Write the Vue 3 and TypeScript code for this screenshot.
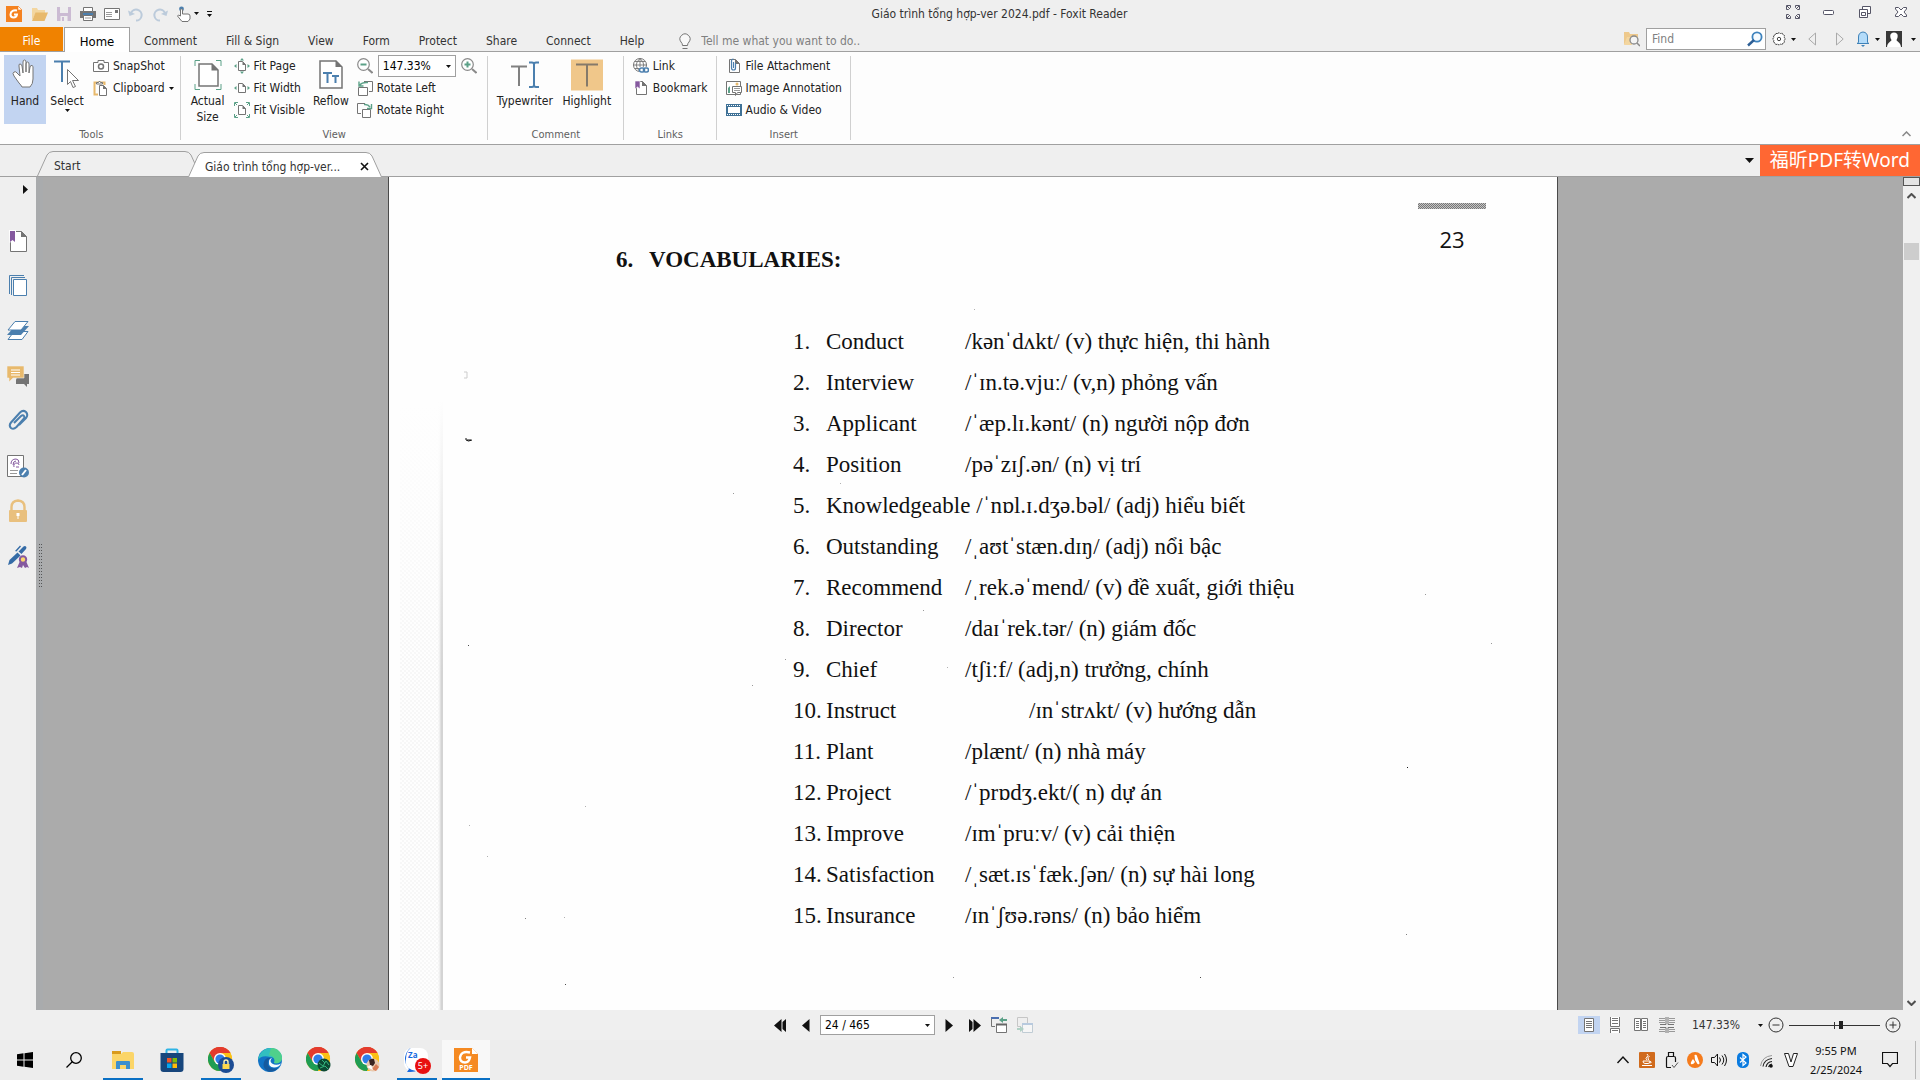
<script setup lang="ts">
import { h, ref } from 'vue'

interface Glyph { w: number; h: number; body: string }
interface Entry { word: string; meaning: string; tab?: boolean }

const page = '<path d="M3.5 1.5h6l4 4v9h-10z" fill="#fff" stroke="#747474"/><path d="M9 1v5h5z" fill="#747474"/>'
const smallPage = '<path d="M4.500 3.500h4l3 3v6h-7z" fill="#fff" stroke="#747474"/><path d="M8.500 3v4h3.500z" fill="#747474"/>'
const chromeBall = `<circle cx="12" cy="12" r="12" fill="#fbc116"/>
  <path d="M12 12 1.600 6A12 12 0 0 1 22.400 6z" fill="#e33b2e"/><path d="M12 6h10.400A12 12 0 0 0 1.600 6l5.200 9z" fill="#e33b2e"/>
  <path d="M1.600 6A12 12 0 0 0 12 24l5.200-9L12 12 6.800 15z" fill="#1f9d54"/><path d="M12 24a12 12 0 0 0 10.400-18H12l5.200 9z" fill="#fbc116"/>
  <circle cx="12" cy="12" r="6" fill="#fff"/><circle cx="12" cy="12" r="4.600" fill="#2f7de9"/>`

const glyphs: Record<string, Glyph> = {
  foxit: { w: 16, h: 16, body: '<path d="M0 0h12l4 4v12H0z" fill="#f58220"/><path d="M12 0v4h4z" fill="#fff" stroke="#f58220" stroke-width=".6"/><path d="M11 4.500C8 3.500 4.500 5 4.500 8.500c0 4 6 4 6.500 0H8" fill="none" stroke="#fff" stroke-width="2"/>' },
  open: { w: 16, h: 16, body: '<path d="M0 14V2h5l1 2h7v3H4z" fill="#f3d6a0"/><path d="M3.500 6.500H16L12.500 15H0z" fill="#e8b96c"/>' },
  save: { w: 16, h: 16, body: '<path d="M1 1h14v14H1z" fill="#cbbbd3"/><path d="M4 1h8v6H4z" fill="#eee"/><path d="M4.500 10h7v5h-7z" fill="#eee"/><path d="M6 11h2v4H6z" fill="#cbbbd3"/>' },
  print: { w: 16, h: 16, body: '<path d="M0 5h16v7H0z" fill="#747474"/><path d="M3.500 1.500h9v4h-9z" fill="#fff" stroke="#747474"/><path d="M3.500 9.500h9v5h-9z" fill="#fff" stroke="#747474"/><path d="M3 7h10v2H3z" fill="#4b7fae"/><path d="M5 12h6" stroke="#999"/>' },
  mail: { w: 16, h: 16, body: '<path d="M.500 2.500h15v11H.500z" fill="#fff" stroke="#747474"/><path d="M2 6.500h6M2 8.500h6M2 10.500h6" stroke="#999"/><path d="M11 4h3v3h-3z" fill="#747474"/>' },
  undo: { w: 16, h: 16, body: '<path d="M3 7a5.500 5.500 0 1 1 5 7.500" fill="none" stroke="#bccbdb" stroke-width="2"/><path d="M0 4.500 7 8 1.500 10z" fill="#bccbdb"/>' },
  redo: { w: 16, h: 16, body: '<path d="M13 7a5.500 5.500 0 1 0-5 7.500" fill="none" stroke="#bccbdb" stroke-width="2"/><path d="M16 4.500 9 8l5.500 2z" fill="#bccbdb"/>' },
  touch: { w: 16, h: 16, body: '<circle cx="5.500" cy="3" r="2.400" fill="#4b7fae"/><path d="M4.500 10V3.500q1-1 2 0V8h5.500q2 0 2 2v3l-2 2.500H6L1.500 10l1-1z" fill="#fff" stroke="#747474"/>' },
  caret: { w: 5, h: 3, body: '<path d="M0 0h5L2.500 3z" fill="#111"/>' },
  customize: { w: 5, h: 6, body: '<path d="M0 0h5v1H0zM0 3h5L2.500 6z" fill="#111"/>' },
  bigcaret: { w: 9, h: 5, body: '<path d="M0 0h9L4.500 5z" fill="#111"/>' },
  full: { w: 14, h: 14, body: '<path d="M.500 4.500v-4h4v2l-2 2zM9.500 .500h4v4h-2l-2-2zM.500 9.500v4h4v-2l-2-2zM9.500 13.500h4v-4h-2l-2 2zM1 1l3 3M13 1l-3 3M1 13l3-3M13 13l-3-3" fill="none" stroke="#556"/>' },
  minimize: { w: 12, h: 14, body: '<rect x=".500" y="5.500" width="10" height="4" rx="1" fill="#fff" stroke="#556"/>' },
  restore: { w: 12, h: 14, body: '<path d="M3.500 4V1.500h8v7H9" fill="#fff" stroke="#556"/><path d="M.500 4.500h8v8h-8zM2.500 7.500h4v3h-4z" fill="#fff" stroke="#556"/>' },
  close: { w: 12, h: 14, body: '<path d="M.500 2.500h3l2.500 2.500 2.500-2.500h3v1.500L9 7l2.500 3v1.500h-3L6 9l-2.500 2.500h-3V10L3 7 .500 4z" fill="#fff" stroke="#556"/>' },
  findFolder: { w: 16, h: 16, body: '<path d="M0 14V1h5l1 2h8v4H4z" fill="#eec98c"/><path d="M0 14 3 6h5v8z" fill="#f3d6a0"/><circle cx="10" cy="9" r="4" fill="#f4f4f4" stroke="#8a8a8a" stroke-width="1.300"/><path d="m13 12 3 3" stroke="#8a8a8a" stroke-width="1.500"/>' },
  search: { w: 16, h: 16, body: '<circle cx="10" cy="6" r="4.600" fill="#f6fbff" stroke="#3e83bd" stroke-width="1.800"/><path d="M7 9 1 14.500" stroke="#2d5f96" stroke-width="2.400"/>' },
  gear: { w: 14, h: 14, body: '<path d="M5.500 1.500 7 .700l1.500.800 1.700-.300.800 1.500 1.500.800-.300 1.700L13.300 7l-1.100 1.500.300 1.700-1.500.800-.800 1.500-1.700-.300-1.500.800-1.500-.800-1.700.300-.800-1.500-1.500-.800.300-1.700L.700 7l1.100-1.500-.300-1.700 1.500-.800.800-1.500z" fill="#fff" stroke="#444" stroke-dasharray="2 .500"/><circle cx="7" cy="7" r="1.700" fill="none" stroke="#444"/>' },
  prev: { w: 9, h: 14, body: '<path d="M7.500 1v12L.800 7z" fill="none" stroke="#aaa"/>' },
  next: { w: 9, h: 14, body: '<path d="M1.500 1v12L8.200 7z" fill="none" stroke="#aaa"/>' },
  bell: { w: 14, h: 16, body: '<path d="M2.500 11.500V6q0-4.500 4.500-5 4.500.500 4.500 5v5.500l1.500 1H1z" fill="#b4dcfa" stroke="#3f82b8"/><path d="M5 14h4l-2 2z" fill="#3f82b8"/>' },
  person: { w: 16, h: 16, body: '<path d="M0 0h16v16H0z" fill="#383838"/><path d="M8 1.500c5 0 4 5.500 2.500 7.500 0 1.500 4 2 4.500 7H1c.500-5 4.500-5.500 4.500-7C4 7 3 1.500 8 1.500z" fill="#fff"/>' },
  bulb: { w: 12, h: 16, body: '<path d="M3.500 12.500q0-2-1.500-3.500a5 5 0 1 1 8 0q-1.500 1.500-1.500 3.500zM3.500 15.500h5" fill="#f8f8f8" stroke="#747474"/>' },
  hand: { w: 28, h: 32, body: '<path d="M9 17 8 7q-.500-2 1-2t2 2l1 7V3q0-2 1.500-2T15 3v10-8q0-2 1.500-2T18 5v9l1-6q.500-2 2-1.500t1 2.500v11q0 5-3 8h-8q-1-2-3-4L3 17q-2-3 0-4t3 1z" fill="#fff" stroke="#747474"/>' },
  select: { w: 28, h: 30, body: '<path d="M1 1.500h16M9 1v21" fill="none" stroke="#4b7fae" stroke-width="2"/><path d="m14.500 9.500 11 11h-6l3 6-2.500 1-2.500-6-3 3z" fill="#fff" stroke="#747474"/>' },
  camera: { w: 16, h: 14, body: '<path d="M.500 3.500H5v-2h6v2h4.500v9H.500z" fill="#fff" stroke="#747474"/><circle cx="8" cy="7.500" r="2.500" fill="none" stroke="#747474" stroke-width="1.500"/>' },
  clipboard: { w: 16, h: 16, body: '<path d="M5 14.500H1.500v-12h10V5" fill="none" stroke="#e8b96c" stroke-width="2"/><path d="M3.500 2.500h2q1-3 2 0h2V4h-6z" fill="#fff" stroke="#747474"/><path d="M6.500 5.500h4l3 3v7h-7z" fill="#fff" stroke="#747474"/><path d="M10 5v4h4z" fill="#747474"/>' },
  actual: { w: 28, h: 30, body: '<path d="M1 6V.500h5M22 .500h5V6M1 24v5.500h5M22 29.500h5V24" fill="none" stroke="#5ba087"/><path d="M5 4h13l6 6v16H5z" fill="#fff" stroke="#747474" stroke-width="1.500"/><path d="M17.500 3.500v7H24z" fill="#747474"/>' },
  fitPage: { w: 16, h: 16, body: smallPage + '<path d="M6 2.500 8 0l2 2.500zM6 13.500 8 16l2-2.500zM2.500 6 0 8l2.500 2zM13.500 6 16 8l-2.500 2z" fill="#5ba087"/>' },
  fitWidth: { w: 16, h: 16, body: smallPage + '<path d="M2.500 6 0 8l2.500 2zM13.500 6 16 8l-2.500 2z" fill="#5ba087"/>' },
  fitVisible: { w: 16, h: 16, body: smallPage + '<path d="M.500 4V.500H4M12 .500h3.500V4M.500 12v3.500H4M12 15.500h3.500V12" fill="none" stroke="#5ba087"/><path d="m1 1 2 2m12-2-2 2M1 15l2-2m12 2-2-2" stroke="#5ba087"/>' },
  reflow: { w: 24, h: 30, body: '<path d="M1 1h16l6 6v21H1z" fill="#fff" stroke="#747474" stroke-width="1.500"/><path d="M16.500.500V7H23z" fill="#747474"/><path d="M4 13h9M8.500 13v10M13 16h7M16.500 16v7" fill="none" stroke="#4b7fae" stroke-width="2"/>' },
  zoomOut: { w: 16, h: 16, body: '<circle cx="6.500" cy="6.500" r="5.800" fill="#fff" stroke="#8a8a8a" stroke-width="1.200"/><path d="m11 11 4.500 4" stroke="#8a8a8a" stroke-width="2"/><path d="M3.500 6.500h6" stroke="#5ba087" stroke-width="2"/>' },
  zoomIn: { w: 16, h: 16, body: '<circle cx="6.500" cy="6.500" r="5.800" fill="#fff" stroke="#8a8a8a" stroke-width="1.200"/><path d="m11 11 4.500 4" stroke="#8a8a8a" stroke-width="2"/><path d="M3.500 6.500h6M6.500 3.500v6" stroke="#5ba087" stroke-width="2"/>' },
  rotateLeft: { w: 16, h: 16, body: '<path d="M7 1.500h8.500v10H12" fill="none" stroke="#747474"/><path d="M1.500 7.500h9v8h-9z" fill="#fff" stroke="#747474"/><path d="M3 5q2-3 8-2.500M2 1.500v4.500h4.500" fill="none" stroke="#5ba087" stroke-width="1.400"/>' },
  rotateRight: { w: 16, h: 16, body: '<path d="M8 1.500H.500v10H4" fill="none" stroke="#747474"/><path d="M5.500 7.500h8v8h-8z" fill="#fff" stroke="#747474"/><path d="M13 5q-2-3-6-2.500M14.500 2v4.500H10" fill="none" stroke="#5ba087" stroke-width="1.400"/>' },
  typewriter: { w: 28, h: 28, body: '<path d="M0 5.500h16M8 5v20" stroke="#808080" stroke-width="2"/><path d="M18 1.500h3q2 0 2 2 0-2 2-2h3M23 3v22M18 26h3q2 0 2-2 0 2 2 2h3" fill="none" stroke="#4b7fae" stroke-width="2"/>' },
  highlight: { w: 32, h: 31, body: '<path d="M0 0h32v31H0z" fill="#f0c78a"/><path d="M5 5h22M16 5v22" stroke="#857a6a" stroke-width="2"/>' },
  link: { w: 16, h: 16, body: '<circle cx="7" cy="7" r="6.500" fill="#fff" stroke="#747474"/><path d="M.500 7h13M7 .500v13M2 3.500h10M2 10.500h7M7 .500Q-.500 7 7 13.500M7 .500Q14.500 7 7 13.500" fill="none" stroke="#747474" stroke-width=".900"/><path d="M6 9h10v6H6z" fill="#fff"/><rect x="6.500" y="10" width="5" height="4" rx="2" fill="none" stroke="#4b7fae" stroke-width="1.600"/><rect x="10.500" y="10" width="5" height="4" rx="2" fill="none" stroke="#4b7fae" stroke-width="1.600"/>' },
  bookmark: { w: 16, h: 16, body: page + '<path d="M2 1h5v8L4.500 7 2 9z" fill="#85599f" stroke="#fff" stroke-width=".600"/>' },
  attach: { w: 16, h: 16, body: page + '<path d="M9.500 5v5q0 2-2 2t-2-2V3q0-2 2-2M7.500 4v6" fill="none" stroke="#4b7fae" stroke-width="1.200"/>' },
  imageNote: { w: 16, h: 16, body: '<path d="M.500 1.500h14v13H.500z" fill="#fff" stroke="#747474"/><path d="M2 13V8l2-2v7z" fill="#5ba087"/><circle cx="11" cy="4" r="1.500" fill="#e8b96c"/><path d="M6.500 6.500h9v6h-4l-2 3v-3h-3z" fill="#fff" stroke="#747474"/><path d="M8 8.500h6M8 10.500h6" stroke="#999"/>' },
  video: { w: 16, h: 12, body: '<path d="M0 0h16v12H0z" fill="#3f7196"/><path d="M2 3h12v6H2z" fill="#fff"/><path d="M1 1.500h14M1 10.500h14" stroke="#fff" stroke-dasharray="1 1"/>' },
  collapse: { w: 9, h: 6, body: '<path d="m.500 5 4-4 4 4" fill="none" stroke="#888" stroke-width="1.500"/>' },
  scrollUp: { w: 9, h: 6, body: '<path d="m.500 5 4-4 4 4" fill="none" stroke="#505050" stroke-width="2"/>' },
  scrollDown: { w: 9, h: 6, body: '<path d="m.500 1 4 4 4-4" fill="none" stroke="#505050" stroke-width="2"/>' },
  cross: { w: 9, h: 9, body: '<path d="m1 1 7 7M8 1 1 8" stroke="#111" stroke-width="1.600"/>' },
  expand: { w: 5, h: 9, body: '<path d="M0 0v9l5-4.500z" fill="#111"/>' },
  sBookmark: { w: 24, h: 24, body: '<path d="M4.500 2.500h11l5 5v15h-16z" fill="#fff" stroke="#747474"/><path d="M15 2v6h6z" fill="#747474"/><path d="M3 1h7v13l-3-2.500L3.500 14z" fill="#fff"/><path d="M4 2h5v11l-2.500-2L4 13z" fill="#85599f"/>' },
  sPages: { w: 24, h: 24, body: '<path d="M3.500 20V1.500H18M5.500 21V3.500H19" fill="none" stroke="#4b7fae"/><path d="M7.500 5.500h13v16h-13z" fill="#fff" stroke="#4b7fae"/>' },
  sLayers: { w: 24, h: 24, body: '<path d="M2 20.500h14l6-8H8z" fill="#fff" stroke="#4b7fae"/><path d="M1 16h14l8-9H9z" fill="#4b7fae"/><path d="M2 11h13l7-8.500H9z" fill="#fff" stroke="#4b7fae"/>' },
  sComments: { w: 24, h: 24, body: '<path d="M12 10h11v10h-2v3l-3-3h-8v-4z" fill="#747474"/><path d="M1 2h17v12H7l-4 4v-4H1z" fill="#e8b96c" stroke="#efefef" stroke-width=".600"/><path d="M5 6h9M5 8.500h9M5 11h9" stroke="#fff"/>' },
  sClip: { w: 24, h: 24, body: '<path d="m8 14 7-7q2-1.500 3 0t-.500 3l-7 8q-3 3-5.500 1-2.500-2.500 0-5.500l9-10q3-3 6-.500 2.500 3 0 6l-7 7" fill="none" stroke="#4b7fae" stroke-width="2"/>' },
  sSign: { w: 24, h: 24, body: '<path d="M1.500 1.500h16v21h-16z" fill="#fff" stroke="#747474"/><path d="M5 10q0-5 5-5 3 0 3 4M7 11q0-4 3-4M8 13q-1-4 3-4 2 0 2 2M10 13h3" fill="none" stroke="#85599f"/><path d="M4 16.500h8M4 19.500h7" stroke="#999"/><circle cx="18" cy="18.500" r="5" fill="#4b7fae"/><path d="m16 21 4-5" stroke="#fff" stroke-width="2"/>' },
  sLock: { w: 24, h: 24, body: '<path d="M5.500 12V8q0-6 6.500-6.500Q18.500 2 18.500 8v4" fill="none" stroke="#e9c07e" stroke-width="2.400"/><rect x="3" y="11" width="18" height="12" rx="1" fill="#e9c07e"/><path d="M10.500 14h3v3h-1v3h-1v-3h-1z" fill="#fff"/>' },
  sPen: { w: 24, h: 24, body: '<path d="m2 21 1.500-5 8-7.500 3 3L6 19.500z" fill="#346ba6"/><path d="m12.500 7.500 5-5q1.500-1 2.500 0t0 2.500l-4.500 5zM9 7l5-5.500 1 1-4.500 5z" fill="#346ba6"/><path d="m14 17-3 7 3-1 2 1 1-3 2 3 2-1 2 1-3-7z" fill="#85599f"/><circle cx="17" cy="15.500" r="3.200" fill="#ffd76b" stroke="#85599f" stroke-width="2"/>' },
  first: { w: 13, h: 13, body: '<path d="M7.500 0v13L0 6.500zM12 0v13L8.500 10V3z" fill="#111"/>' },
  back: { w: 8, h: 13, body: '<path d="M7.500 0v13L0 6.500z" fill="#111"/>' },
  forward: { w: 8, h: 13, body: '<path d="M.500 0v13L8 6.500z" fill="#111"/>' },
  last: { w: 13, h: 13, body: '<path d="M5.500 0v13l7.500-6.500zM1 0v13l3.500-3V3z" fill="#111"/>' },
  viewBack: { w: 16, h: 16, body: '<path d="M4 9.500H.500v-8H7" fill="none" stroke="#747474"/><path d="M0 0h8v2H0z" fill="#4a6fb0"/><path d="M5.500 7.500h10v8h-10z" fill="#fff" stroke="#747474"/><path d="M5 6.500h11v2H5z" fill="#666"/><path d="M16 3h-6" stroke="#5ba087" stroke-width="2"/><path d="M12 0 8 3l4 3z" fill="#5ba087"/>' },
  viewNext: { w: 16, h: 16, body: '<path d="M4 9.500H.500v-9h10V6" fill="none" stroke="#c6c6c6"/><path d="M5.500 7.500h10v8h-10z" fill="#f6f6f6" stroke="#c0ccd4"/><path d="M5 6h11v2H5z" fill="#b8cade"/><path d="M0 12h5" stroke="#b0d0c4" stroke-width="2"/><path d="m3 9 4 3-4 3z" fill="#b0d0c4"/>' },
  single: { w: 16, h: 16, body: '<path d="M3.500 1.500h9v13h-9z" fill="#fff" stroke="#747474"/><path d="M5 4.500h6M5 6.500h6M5 8.500h6M5 10.500h6" stroke="#747474"/>' },
  continuous: { w: 16, h: 16, body: '<path d="M3.500 0v9.500h9V0M3.500 16v-4.500h9V16" fill="#fff" stroke="#747474"/><path d="M5 1.500h6M5 3.500h6M5 6.500h6M5 13.500h6" stroke="#747474"/>' },
  facing: { w: 16, h: 16, body: '<path d="M1.500 1.500h6v12h-6zM8.500 1.500h6v12h-6z" fill="#fff" stroke="#747474"/><path d="M3 4.500h3M3 6.500h3M3 8.500h3M10 4.500h3M10 6.500h3M10 8.500h3M3 10.500h3M10 10.500h3" stroke="#747474"/>' },
  contFacing: { w: 16, h: 16, body: '<path d="M7 0v7.500H1M9 0v7.500h6M7 16v-5.500H1M9 16v-5.500h6" fill="none" stroke="#747474"/><path d="M0 1.500h6M0 3.500h6M0 5.500h6M10 1.500h6M10 3.500h6M10 5.500h6M0 12.500h6M10 12.500h6M0 14.500h6M10 14.500h6" stroke="#999"/>' },
  minus: { w: 16, h: 16, body: '<circle cx="8" cy="8" r="7" fill="none" stroke="#333"/><path d="M4.500 8h7" stroke="#333"/>' },
  plus: { w: 16, h: 16, body: '<circle cx="8" cy="8" r="7" fill="none" stroke="#333"/><path d="M4.500 8h7M8 4.500v7" stroke="#333"/>' },
  windows: { w: 16, h: 16, body: '<path d="M0 2.200 6.500 1.300v6.200H0zM7.500 1.200 16 0v7.500H7.500zM0 8.500h6.500v6.200L0 13.800zM7.500 8.500H16V16l-8.500-1.200z" fill="#000"/>' },
  loupe: { w: 16, h: 16, body: '<circle cx="10" cy="6" r="5.300" fill="none" stroke="#000" stroke-width="1.300"/><path d="M6.500 9.500.500 15.500" stroke="#000" stroke-width="1.300"/>' },
  explorer: { w: 24, h: 24, body: '<path d="M1 3h9v4H1z" fill="#d99b1c"/><path d="M1 6h9l2-2h9q2 0 2 2v15H1z" fill="#fbd568"/><path d="M5 21v-7q0-1 1-1h12q1 0 1 1v7h-4v-4H9v4z" fill="#3c8fce"/>' },
  store: { w: 24, h: 24, body: '<path d="M6.500 6V2.500q0-1 1-1h9q1 0 1 1V6" fill="none" stroke="#2fb4e5" stroke-width="2"/><path d="M.500 5h23v16q0 3-3 3h-17q-3 0-3-3z" fill="#17467c"/><path d="M7 10h4.500v4.500H7z" fill="#f35325"/><path d="M12.500 10H17v4.500h-4.500z" fill="#81bc06"/><path d="M7 15.500h4.500V20H7z" fill="#05a6f0"/><path d="M12.500 15.500H17V20h-4.500z" fill="#ffba08"/>' },
  chromeLock: { w: 26, h: 26, body: chromeBall + '<circle cx="18" cy="18" r="8" fill="#1c4c94"/><path d="M16 17v-2q0-2 2-2t2 2v2" fill="none" stroke="#fff3b0" stroke-width="1.400"/><path d="M14.500 17h7v5h-7z" fill="#ffd84d"/>' },
  chromeGreen: { w: 26, h: 26, body: chromeBall + '<circle cx="18" cy="18" r="6.500" fill="#0c4a33"/><path d="m13 16 4 3 3-5 3 4M14 21l5-2 3 3M16 13l3 3" fill="none" stroke="#34b47c"/>' },
  chromePhoto: { w: 26, h: 26, body: chromeBall + '<circle cx="18" cy="18" r="6.500" fill="#e9c9ae"/><path d="M14 13q3-2 5-1l1 4-2 3-3-1z" fill="#3a2420"/><path d="m17 22 4-5 3 3-3 4z" fill="#d97b54"/><path d="m12 20 4-2 2 5z" fill="#fff"/>' },
  edge: { w: 24, h: 24, body: '<circle cx="12" cy="12" r="12" fill="#1173c5"/><path d="M0 12C1 4 7 0 12 0c8 0 12 5 12 10 0 4-4 6-8 5 2-3 0-6-4-6-6-2-10 0-12 3z" fill="#31bfc0"/><path d="M13 0c7 0 11 5 11 10 0 4-4 6-8 5 2-4-1-7-5-8z" fill="#4fd08b"/><path d="M13 10q-4 2-3 7 2 5 10 3-4 5-10 3.500Q4 20 6 14q2-5 7-4z" fill="#155a9e"/><path d="M14 10q-3 3 0 5.500 4 2.500 9 0-2 4-7 4-6-.500-5-6 0-3 3-3.500z" fill="#f4fbff"/>' },
  chat: { w: 26, h: 26, body: '<rect x="0" y="1" width="24" height="23" rx="8" fill="#fff"/><path d="M5 2q-8 10 0 20l-2 3q7 0 9-1-12-2-10-12 0-8 5-11z" fill="#1769df"/>' },
  reader: { w: 24, h: 24, body: '<path d="M0 0h18l6 6v18H0z" fill="#f58a22"/><path d="M18 0v6h6z" fill="#fff"/><path d="M16 4.500q-9-2-10 5 0 5 5 5 4 0 5-5h-4" fill="none" stroke="#fff" stroke-width="2.400"/>' },
  up: { w: 16, h: 16, body: '<path d="m2.500 11 5.500-6 5.500 6" fill="none" stroke="#111" stroke-width="1.400"/>' },
  java: { w: 16, h: 16, body: '<rect width="16" height="16" rx="1" fill="#d06a1c"/><path d="M8 2q2 1.500 0 3t0 3M10.500 4Q8 5.500 9.500 8" fill="none" stroke="#fff"/><path d="M4 9h7q0 2.500-2 2.500H6Q4 11.500 4 9zM11 9.500q2.500 0 0 2M3 13.500h10" fill="none" stroke="#fff"/>' },
  usb: { w: 16, h: 16, body: '<path d="M5.500 4.500v-4h5v4M8 15.500H4.500q-1 0-1-1V6q0-1.500 1.500-1.500h6Q12.500 4.500 12.500 6v4" fill="none" stroke="#111" stroke-width="1.200"/><path d="m9 13 2 2.500 4-5" fill="none" stroke="#555"/>' },
  avast: { w: 16, h: 16, body: '<circle cx="8" cy="8" r="8" fill="#f57b1c"/><path d="M7.500 3q2-1 2.500 1l2.500 7q0 2-2 1L8 8zM6 7q-3 4-2 5 2 1 4-2z" fill="#fff"/>' },
  speaker: { w: 16, h: 16, body: '<path d="M.500 5.500h3l3-3.500v12l-3-3.500h-3z" fill="none" stroke="#111"/><path d="M8.500 5.500q2 2.500 0 5M11 3.500q3.500 4.500 0 9M13.500 2q4 6 0 12" fill="none" stroke="#111"/>' },
  bluetooth: { w: 16, h: 16, body: '<rect x="2" width="12" height="16" rx="5.500" fill="#0a7be0"/><path d="m5 5.500 6 5.500-3 2.500v-11L11 5l-6 5.500" fill="none" stroke="#fff" stroke-width="1.200"/>' },
  wifi: { w: 16, h: 16, body: '<path d="M1.500 14Q3 4.500 13 3.500" fill="none" stroke="#999"/><path d="M4 14.500q1-7 9-8M7 15q1-5 6-5.500M9.500 15q1-2.500 3.500-3" fill="none" stroke="#222" stroke-width="1.200"/><circle cx="12" cy="14" r="1.800" fill="#111"/>' },
  unikey: { w: 16, h: 16, body: '<path d="M1.500 1.500h4L8 10l2.500-8.500h4l-4.500 13H6z" fill="#fff" stroke="#222"/>' },
  notice: { w: 16, h: 18, body: '<path d="M.500 1.500h15v11h-5L8 15.500l-2.500-3h-5z" fill="none" stroke="#111" stroke-width="1.200"/>' },
}

const Icon = (props: { name: string }) => {
  const g = glyphs[props.name]
  return h('svg', { class: 'icon', width: g.w, height: g.h, viewBox: `0 0 ${g.w} ${g.h}`, 'aria-hidden': 'true', innerHTML: g.body })
}
Icon.props = ['name']

const quick = ['open', 'save', 'print', 'mail', 'undo', 'redo', 'touch']
const menus = ['Comment', 'Fill & Sign', 'View', 'Form', 'Protect', 'Share', 'Connect', 'Help']
const fits = [['fitPage', 'Fit Page'], ['fitWidth', 'Fit Width'], ['fitVisible', 'Fit Visible']]
const inserts = [['attach', 'File Attachment'], ['imageNote', 'Image Annotation'], ['video', 'Audio & Video']]
const panels = [
  ['sBookmark', 'Bookmarks'], ['sPages', 'Pages'], ['sLayers', 'Layers'], ['sComments', 'Comments'],
  ['sClip', 'Attachments'], ['sSign', 'Signatures'], ['sLock', 'Security'], ['sPen', 'Digital signatures'],
]
const layouts = [['single', 'Single page'], ['continuous', 'Continuous'], ['facing', 'Facing'], ['contFacing', 'Continuous facing']]
const apps = [
  { icon: 'windows', name: 'Start' }, { icon: 'loupe', name: 'Search' },
  { icon: 'explorer', name: 'File Explorer', open: true }, { icon: 'store', name: 'Store' },
  { icon: 'chromeLock', name: 'Chrome', open: true }, { icon: 'edge', name: 'Edge' },
  { icon: 'chromeGreen', name: 'Chrome profile 2' }, { icon: 'chromePhoto', name: 'Chrome profile 3' },
  { icon: 'chat', name: 'Zalo', open: true, badge: '5+' }, { icon: 'reader', name: 'Foxit Reader', open: true, active: true },
]
const tray = ['up', 'java', 'usb', 'avast', 'speaker', 'bluetooth', 'wifi', 'unikey']
const zoom = ref(57)

const entries: Entry[] = [
  { word: 'Conduct', meaning: '/kənˈdʌkt/ (v) thực hiện, thi hành' },
  { word: 'Interview', meaning: '/ˈɪn.tə.vjuː/ (v,n) phỏng vấn' },
  { word: 'Applicant', meaning: '/ˈæp.lɪ.kənt/ (n) người nộp đơn' },
  { word: 'Position', meaning: '/pəˈzɪʃ.ən/ (n) vị trí' },
  { word: 'Knowledgeable', meaning: '/ˈnɒl.ɪ.dʒə.bəl/ (adj) hiểu biết' },
  { word: 'Outstanding', meaning: '/ˌaʊtˈstæn.dɪŋ/ (adj) nổi bậc' },
  { word: 'Recommend', meaning: '/ˌrek.əˈmend/ (v) đề xuất, giới thiệu' },
  { word: 'Director', meaning: '/daɪˈrek.tər/ (n) giám đốc' },
  { word: 'Chief', meaning: '/tʃiːf/ (adj,n) trưởng, chính' },
  { word: 'Instruct', meaning: '/ɪnˈstrʌkt/ (v) hướng dẫn', tab: true },
  { word: 'Plant', meaning: '/plænt/ (n) nhà máy' },
  { word: 'Project', meaning: '/ˈprɒdʒ.ekt/( n) dự án' },
  { word: 'Improve', meaning: '/ɪmˈpruːv/ (v) cải thiện' },
  { word: 'Satisfaction', meaning: '/ˌsæt.ɪsˈfæk.ʃən/ (n) sự hài long' },
  { word: 'Insurance', meaning: '/ɪnˈʃʊə.rəns/ (n) bảo hiểm' },
]

/* dust left by the scanner glass: x, y, opacity */
const specks = [
  [79, 468, .7], [344, 316, .4], [451, 306, .3], [1018, 590, .9], [80, 648, .3], [98, 679, .3], [196, 629, .3],
  [136, 741, .5], [175, 740, .3], [1017, 757, .5], [811, 800, .7], [564, 800, .4], [176, 807, .7], [363, 508, .4],
  [585, 132, .3], [1036, 417, .4], [1102, 466, .4], [558, 490, .3], [396, 482, .4], [534, 433, .4],
]
</script>

<template>
  <div class="app">
    <header class="titlebar">
      <div class="quick">
        <Icon name="foxit" class="logo" />
        <button v-for="q in quick" :key="q" :aria-label="q"><Icon :name="q" /></button>
        <Icon name="caret" class="after" />
        <button aria-label="Customize toolbar" class="customize"><Icon name="customize" /></button>
      </div>
      <h1>Giáo trình tổng hợp-ver 2024.pdf - Foxit Reader</h1>
      <div class="window">
        <button aria-label="Full screen"><Icon name="full" /></button>
        <button aria-label="Minimize"><Icon name="minimize" /></button>
        <button aria-label="Restore"><Icon name="restore" /></button>
        <button aria-label="Close"><Icon name="close" /></button>
      </div>
    </header>

    <nav class="menubar">
      <button class="file">File</button>
      <button class="home">Home</button>
      <button v-for="m in menus" :key="m" class="menu">{{ m }}</button>
      <label class="tell"><Icon name="bulb" /><input type="text" placeholder="Tell me what you want to do.." aria-label="Tell me what you want to do"></label>
      <div class="tools">
        <button aria-label="Search folder"><Icon name="findFolder" /></button>
        <label class="find"><input type="text" placeholder="Find" aria-label="Find"><Icon name="search" /></label>
        <button class="drop" aria-label="Settings"><Icon name="gear" /><Icon name="caret" /></button>
        <button class="arrow" aria-label="Previous"><Icon name="prev" /></button>
        <button class="arrow" aria-label="Next"><Icon name="next" /></button>
        <button class="drop" aria-label="Notifications"><Icon name="bell" /><Icon name="caret" /></button>
        <button class="drop account" aria-label="Account"><Icon name="person" /><Icon name="caret" /></button>
      </div>
    </nav>

    <section class="ribbon">
      <div class="group">
        <div class="items">
          <button class="big on"><Icon name="hand" /><span>Hand</span></button>
          <button class="big"><Icon name="select" /><span>Select</span><Icon name="caret" /></button>
          <div class="stack">
            <button><Icon name="camera" />SnapShot</button>
            <button><Icon name="clipboard" />Clipboard<Icon name="caret" /></button>
          </div>
        </div>
        <h2>Tools</h2>
      </div>
      <div class="group">
        <div class="items">
          <button class="big"><Icon name="actual" /><span>Actual<br>Size</span></button>
          <div class="stack"><button v-for="f in fits" :key="f[0]"><Icon :name="f[0]" />{{ f[1] }}</button></div>
          <button class="big"><Icon name="reflow" /><span>Reflow</span></button>
          <div class="stack">
            <div class="zoom">
              <button aria-label="Zoom out"><Icon name="zoomOut" /></button>
              <span class="combo"><select aria-label="Zoom level"><option>147.33%</option></select><Icon name="caret" /></span>
              <button aria-label="Zoom in"><Icon name="zoomIn" /></button>
            </div>
            <button><Icon name="rotateLeft" />Rotate Left</button>
            <button><Icon name="rotateRight" />Rotate Right</button>
          </div>
        </div>
        <h2>View</h2>
      </div>
      <div class="group">
        <div class="items">
          <button class="big wide"><Icon name="typewriter" /><span>Typewriter</span></button>
          <button class="big wide"><Icon name="highlight" /><span>Highlight</span></button>
        </div>
        <h2>Comment</h2>
      </div>
      <div class="group slim">
        <div class="items"><div class="stack">
          <button><Icon name="link" />Link</button>
          <button><Icon name="bookmark" />Bookmark</button>
        </div></div>
        <h2>Links</h2>
      </div>
      <div class="group slim">
        <div class="items"><div class="stack"><button v-for="i in inserts" :key="i[0]"><Icon :name="i[0]" />{{ i[1] }}</button></div></div>
        <h2>Insert</h2>
      </div>
      <button class="collapse" aria-label="Collapse ribbon"><Icon name="collapse" /></button>
    </section>

    <div class="doctabs">
      <button class="doctab">
        <svg width="164" height="25" aria-hidden="true"><path d="M.5 25 10 4q2-3.500 6-3.500h132q4 0 6 3.500L163.500 25" fill="#efefef" stroke="#a0a0a0" /></svg>
        <span>Start</span>
      </button>
      <button class="doctab current">
        <svg width="194" height="25" aria-hidden="true"><path d="M.5 25 10 4q2-3.500 6-3.500h162q4 0 6 3.500L193.500 25" fill="#fff" stroke="#a0a0a0" /></svg>
        <span>Giáo trình tổng hợp-ver...</span><Icon name="cross" />
      </button>
      <button class="tablist" aria-label="Tab list"><Icon name="bigcaret" /></button>
      <a class="promo" href="#">福昕PDF转Word</a>
    </div>

    <main class="main">
      <aside class="side">
        <button class="expand" aria-label="Expand panel"><Icon name="expand" /></button>
        <button v-for="p in panels" :key="p[0]" :aria-label="p[1]"><Icon :name="p[0]" /></button>
      </aside>
      <div class="splitter"><i></i></div>
      <div class="viewer">
        <article class="page">
          <div class="edge"></div>
          <svg class="dust" width="1168" height="833" aria-hidden="true">
            <rect v-for="(s, i) in specks" :key="i" :x="s[0]" :y="s[1]" width="1" height="1" fill="#000" :opacity="s[2]" />
            <path d="M77 261v2q2 2 6 0M78 263h4" fill="none" stroke="#111" />
            <path d="M75 195h3v6h-3" fill="none" stroke="#ccc" />
            <path d="M451 366v3l2-2" fill="none" stroke="#333" />
          </svg>
          <div class="folio"><i></i><span>23</span></div>
          <h2><span>6.</span>VOCABULARIES:</h2>
          <ol>
            <li v-for="(e, i) in entries" :key="e.word">
              <span class="num">{{ i + 1 }}.</span><span class="word" :class="{ tab: e.tab }">{{ e.word }}</span><span>{{ e.meaning }}</span>
            </li>
          </ol>
        </article>
      </div>
      <div class="scroll">
        <i class="split"></i>
        <button aria-label="Scroll up"><Icon name="scrollUp" /></button>
        <i class="thumb"></i>
        <button class="down" aria-label="Scroll down"><Icon name="scrollDown" /></button>
      </div>
    </main>

    <footer class="status">
      <div class="pager">
        <button aria-label="First page"><Icon name="first" /></button>
        <button class="step" aria-label="Previous page"><Icon name="back" /></button>
        <span class="combo"><select aria-label="Page"><option>24 / 465</option></select><Icon name="caret" /></span>
        <button aria-label="Next page"><Icon name="forward" /></button>
        <button class="step" aria-label="Last page"><Icon name="last" /></button>
        <button aria-label="Previous view"><Icon name="viewBack" /></button>
        <button aria-label="Next view"><Icon name="viewNext" /></button>
      </div>
      <div class="layouts">
        <button v-for="(l, i) in layouts" :key="l[0]" :aria-label="l[1]" :class="{ on: i === 0 }"><Icon :name="l[0]" /></button>
      </div>
      <button class="percent">147.33%<Icon name="caret" /></button>
      <div class="slide">
        <button aria-label="Zoom out"><Icon name="minus" /></button>
        <input v-model="zoom" type="range" min="0" max="100" aria-label="Zoom">
        <button aria-label="Zoom in"><Icon name="plus" /></button>
      </div>
    </footer>

    <footer class="taskbar">
      <button v-for="a in apps" :key="a.name" class="task" :class="{ open: a.open, active: a.active }" :aria-label="a.name">
        <Icon :name="a.icon" />
        <small v-if="a.badge" class="zalo">Za</small>
        <b v-if="a.badge">{{ a.badge }}</b>
        <small v-if="a.active" class="pdf">PDF</small>
      </button>
      <div class="tray">
        <button v-for="t in tray" :key="t" :aria-label="t"><Icon :name="t" /></button>
      </div>
      <time><span>9:55 PM</span><span>2/25/2024</span></time>
      <button class="notice" aria-label="Notifications"><Icon name="notice" /></button>
    </footer>
  </div>
</template>

<style>
body { margin: 0; background: #efefef; }
</style>

<style scoped>
* { box-sizing: border-box; }
.app { display: flex; flex-direction: column; height: 100vh; overflow: hidden; background: #efefef; color: #333; font: 12px/16px "DejaVu Sans Condensed", "Noto Sans", "Noto Sans CJK SC", sans-serif; }
button { display: flex; align-items: center; justify-content: center; flex: none; margin: 0; padding: 0; border: 0; background: none; color: inherit; font: inherit; white-space: nowrap; }
input, select { min-width: 0; margin: 0; padding: 0; border: 0; background: none; color: #222; font: inherit; outline: 0; appearance: none; }
.icon { display: block; flex: none; }
h1, h2, ol { margin: 0; padding: 0; font: inherit; }

.titlebar { display: flex; align-items: center; flex: none; height: 27px; }
.quick { display: flex; align-items: center; gap: 8px; padding-left: 6px; }
.logo { margin-right: 2px; }
.after { margin-left: -6px; }
.titlebar h1 { flex: 1; text-align: center; }
.window { display: flex; gap: 24px; padding: 0 13px 4px 0; }
.window button { width: 12px; }

.menubar { display: flex; align-items: stretch; flex: none; height: 25px; border-bottom: 1px solid #a0a0a0; }
.file { width: 63px; padding-top: 3px; background: #f08200; color: #fff; }
.home { width: 66px; height: 25px; margin: 0 0 -1px 1px; padding-top: 3px; border: 1px solid #a0a0a0; border-bottom: 0; background: #fff; color: #000; font-size: 13px; }
.menu { margin-right: 1px; padding: 3px 14px 0; }
.tell { display: flex; align-items: center; gap: 10px; flex: 1; padding: 3px 0 0 20px; }
.tell input { flex: 1; }
.tell input::placeholder, .find input::placeholder { color: #808080; opacity: 1; }
.tools { display: flex; align-items: center; gap: 6px; padding-right: 4px; }
.find { display: flex; align-items: center; width: 120px; height: 22px; padding: 0 2px 0 5px; border: 1px solid #a0a0a0; background: #fff; }
.find input { flex: 1; }
.drop { gap: 5px; }
.arrow { width: 21px; }
.account { gap: 9px; }

.ribbon { display: flex; flex: none; height: 93px; border-bottom: 1px solid #a0a0a0; background: #fdfdfd; color: #222; }
.group { display: flex; flex-direction: column; justify-content: space-between; position: relative; padding: 3px 6px 1px; }
.group:first-child { padding-right: 2px; padding-left: 4px; }
.group.slim { padding-right: 4px; padding-left: 4px; }
.group::after { content: ""; position: absolute; top: 4px; right: 0; width: 1px; height: 84px; background: #d0d0d0; }
.group h2 { color: #606060; font-size: 11px; text-align: center; }
.items { display: flex; height: 70px; }
.big { flex-direction: column; justify-content: flex-start; width: 42px; height: 69px; padding-top: 4px; line-height: 16px; }
.big > .icon:first-child { height: 32px; margin-bottom: 2px; }
.big.wide { width: 62px; }
.on { background: #c2d4f1; }
.stack { display: flex; flex-direction: column; margin: 0 5px; }
.stack button { justify-content: flex-start; gap: 4px; height: 22px; }
.zoom { display: flex; align-items: center; gap: 5px; }
.combo { display: flex; align-items: center; width: 78px; height: 22px; padding-right: 4px; border: 1px solid #a0a0a0; background: #fff; }
.combo select { flex: 1; padding-left: 4px; color: #000; }
.collapse { align-self: flex-end; margin: 0 9px 7px auto; }

.doctabs { display: flex; align-items: flex-end; flex: none; height: 32px; padding-left: 37px; border-bottom: 1px solid #a0a0a0; }
.doctab { justify-content: flex-start; position: relative; width: 164px; height: 24px; padding: 4px 0 0 17px; }
.doctab svg:first-child { position: absolute; left: 0; bottom: 0; }
.doctab span { position: relative; }
.current { width: 194px; height: 25px; margin: 0 0 -1px -13px; justify-content: space-between; padding-right: 13px; }
.current .icon { position: relative; }
.tablist { align-self: center; margin: 0 6px 0 auto; }
.promo { flex: none; align-self: stretch; padding: 0 10px; background: #ff6733; color: #fff; font: 19px/31px "Noto Sans", "Noto Sans CJK SC", sans-serif; text-decoration: none; }

.main { display: flex; flex: 1; min-height: 0; background: #ababab; }
.side { flex: none; width: 36px; background: #efefef; }
.side button { width: 36px; height: 45px; }
.side .expand { height: 25px; margin-bottom: 16px; padding-left: 15px; }
.splitter { display: flex; align-items: center; justify-content: flex-end; flex: none; width: 7px; padding: 0 1px 56px 0; background: #a9abad; }
.splitter i { width: 3px; height: 44px; background: linear-gradient(90deg, transparent 1px, #a9abad 1px 2px, transparent 2px), repeating-linear-gradient(#555 0 1px, transparent 1px 3px); }
.viewer { flex: 1; min-width: 0; overflow: hidden; }
.page { position: relative; width: 1170px; max-width: 100%; height: 100%; margin: 0 auto; border: solid #4a4a4a; border-width: 0 1px; background: #fefefe; color: #111; font: 23px/41px "Liberation Serif", serif; }
.edge { position: absolute; left: 11px; top: 223px; bottom: 0; width: 43px; background: linear-gradient(#fefefe, transparent 45%), linear-gradient(90deg, transparent 38px, #ececec 40px, #d4d4d4 41px, #d4d4d4 43px), repeating-conic-gradient(#f7f7f7 0 25%, #fefefe 0 50%) 0 0 / 4px 4px; }
.dust { position: absolute; left: 0; top: 0; }
.folio { display: flex; flex-direction: column; align-items: center; width: 68px; margin-left: auto; margin-right: 71px; padding-top: 26px; font: 22px/32px "Open Sans", "Noto Sans", sans-serif; }
.folio i { width: 68px; height: 6px; margin-bottom: 14px; background: repeating-conic-gradient(#777 0 25%, #c4c4c4 0 50%) 0 0 / 2px 2px; }
.page h2 { display: flex; margin-top: -11px; padding-left: 227px; font-weight: bold; line-height: 32px; }
.page h2 span { width: 33px; }
.page ol { padding: 45px 0 0 404px; list-style: none; }
.page li { display: flex; white-space: nowrap; }
.num { width: 33px; }
.word { min-width: 139px; padding-right: 6px; }
.word.tab { min-width: 203px; }
.scroll { display: flex; flex-direction: column; flex: none; width: 17px; background: #f0f0f0; }
.split { height: 9px; border: 1px solid #555; background: #e4e4e4; }
.scroll button { height: 20px; }
.thumb { height: 17px; margin: 37px 1px 0; background: #cdcdcd; }
.scroll .down { margin-top: auto; height: 14px; }

.status { display: flex; align-items: center; flex: none; height: 30px; padding: 0 19px 0 40%; }
.pager { display: flex; align-items: center; gap: 10px; margin-right: auto; padding-left: 6px; }
.pager .combo { width: 115px; height: 20px; }
.pager .step { margin-left: 5px; }
.layouts { display: flex; gap: 4px; margin-right: 14px; }
.layouts button { width: 22px; height: 18px; }
.percent { gap: 18px; margin-right: 5px; }
.slide { display: flex; align-items: center; gap: 5px; }
.slide input { width: 91px; height: 16px; background: linear-gradient(#333, #333) center / 1px 7px no-repeat, linear-gradient(#333, #333) center / 100% 1px no-repeat; }
.slide input::-webkit-slider-thumb { width: 4px; height: 8px; background: #222; appearance: none; }

.taskbar { display: flex; align-items: center; gap: 1px; flex: none; height: 40px; padding: 0 4px 0 1px; background: #ededed; color: #111; }
.task { position: relative; width: 48px; height: 40px; }
.task.open::after { content: ""; position: absolute; left: 4px; right: 4px; bottom: 0; height: 2px; background: #0a70c4; }
.task.active { background: #f8f8f8; }
.task.active::after { left: 0; right: 0; }
.zalo { position: absolute; left: 15px; top: 10px; color: #1769df; font: bold 8px/10px "Open Sans", sans-serif; }
.task b { position: absolute; left: 22px; top: 18px; width: 16px; height: 16px; border-radius: 50%; background: #e81010; color: #fff; font: 9px/16px "Noto Sans", sans-serif; text-align: center; }
.pdf { position: absolute; left: 0; right: 0; top: 24px; color: #fff; font: bold 7px/8px "Open Sans", sans-serif; text-align: center; }
.tray { display: flex; gap: 8px; margin-left: auto; margin-right: 9px; }
time { display: flex; flex-direction: column; align-items: center; width: 54px; font: 11px/19px "Noto Sans", sans-serif; }
.notice { width: 52px; height: 38px; border-right: 1px solid #b8b8b8; }
</style>
